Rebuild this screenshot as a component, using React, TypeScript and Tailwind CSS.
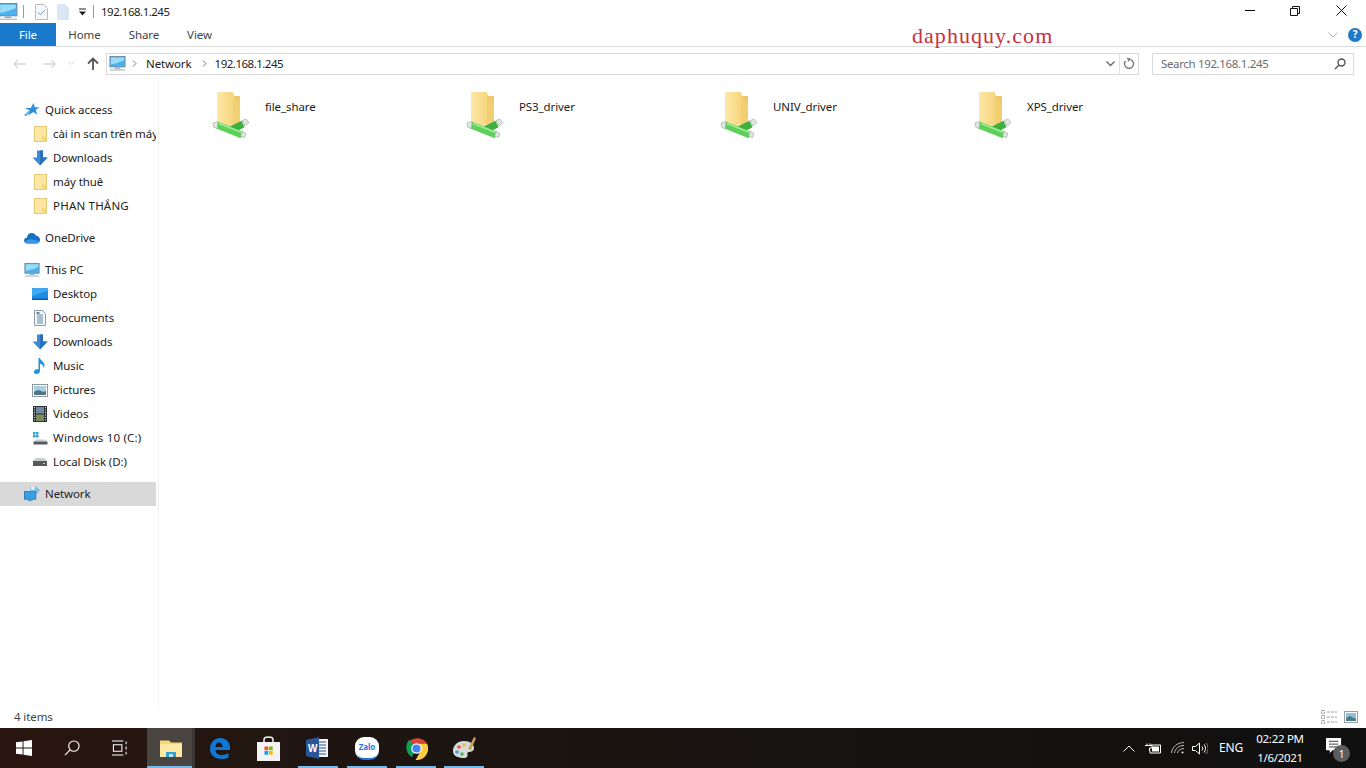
import React from "react";

const Folder = ({ s = 16 }: { s?: number }) => (
  <svg width={13} height={s} viewBox="0 0 13 16">
    <rect x=".5" y=".5" width="12" height="15" fill="#fde6a3" stroke="#e6c976" />
    <path d="M8 9l4.500 3v3.500H8z" fill="#f6d681" />
  </svg>
);
const DownArrow = () => (
  <svg width="16" height="16" viewBox="0 0 16 16">
    <path d="M5 0.5h6v7h4.500L8 15.500 0.500 7.500H5z" fill="#3d8ad6" />
    <path d="M8 0.500h3v7h4.500L8 15.500z" fill="#2a6fba" />
  </svg>
);
const Monitor = ({ w = 18 }: { w?: number }) => (
  <svg width={w} height={(w * 16) / 18} viewBox="0 0 18 16">
    <rect x="1" y="0.500" width="16" height="11" fill="#4db1ee" stroke="#6a8ca3" />
    <path d="M2 1.500h14v3C11 7 6 8 2 9z" fill="#9bdcf9" />
    <rect x="6" y="12" width="6" height="1.500" fill="#9fb0bd" />
    <rect x="1" y="14" width="16" height="1.500" fill="#b9c3cb" />
  </svg>
);
const Star = () => (
  <svg width="16" height="16" viewBox="0 0 16 16">
    <path d="M9.500 1l1.400 4.300 4.600.1-3.700 2.700 1.400 4.600-3.900-2.800L4 13.500l1.700-5L1 6.100l5.700-.1z" fill="#2f8fdc" />
    <path d="M0 13l5-4.500 1 1.500L2 14.500z" fill="#5fb3ea" />
  </svg>
);
const Cloud = () => (
  <svg width="16" height="12" viewBox="0 0 16 12">
    <path d="M3.500 11.500C1 11.500 0 10 0 8.600c0-1.700 1.300-2.800 2.800-2.800C3.300 3 5.200 1 7.800 1c2 0 3.400 1 4.200 2.800 2.200 0 4 1.800 4 4 0 2-1.500 3.700-3.500 3.700z" fill="#1670c4" />
    <path d="M3.500 11.500C2 11.500 1 10.600 1 9.600c2-1.500 5-3 8-2 2 .8 4 1.500 7 1-.2 1.700-1.800 2.900-3.500 2.900z" fill="#3c97e0" />
  </svg>
);
const DesktopIcon = () => (
  <svg width="16" height="12" viewBox="0 0 16 12">
    <rect width="16" height="12" fill="#1e8de6" />
    <path d="M0 0h16v3C10 4 5 7 0 8z" fill="#3fa8f2" />
    <rect y="10.500" width="16" height="1.500" fill="#0d5aa5" />
  </svg>
);
const Docs = () => (
  <svg width="14" height="16" viewBox="0 0 14 16">
    <path d="M1.500.5h8l3 3v12h-11z" fill="#f3f6f8" stroke="#8f9ba5" />
    <path d="M4 5h6M4 7h6M4 9h6M4 11h6M4 13h6" stroke="#5b8bad" />
    <rect x="3.500" y="2" width="3" height="2" fill="#5b8bad" />
  </svg>
);
const Music = () => (
  <svg width="12" height="16" viewBox="0 0 12 16">
    <path d="M4.500 0h1.500c.3 2.500 4.500 3.500 4.500 7.500 0 1-.3 2-.8 2.800.2-2.500-1.700-4-3.700-4.500v7.200c0 1.800-1.700 3-3.500 3S0 15 0 13.700s1.400-2.500 3-2.500c.6 0 1.100.1 1.500.3z" fill="#1c93dc" />
  </svg>
);
const Pictures = () => (
  <svg width="16" height="13" viewBox="0 0 16 13">
    <rect x=".5" y=".5" width="15" height="12" fill="#fff" stroke="#8d969c" />
    <rect x="2" y="2" width="12" height="9" fill="#a7cfe4" />
    <path d="M2 8c3-2 5-2 7-1s3 1 5 0v4H2z" fill="#4c7482" />
  </svg>
);
const Videos = () => (
  <svg width="14" height="16" viewBox="0 0 14 16">
    <rect width="14" height="16" fill="#2d3338" />
    <rect x="3" y="1" width="8" height="6.500" fill="#6f8aa0" />
    <rect x="3" y="8.500" width="8" height="6.500" fill="#7b8c5c" />
    <path d="M1 1.500h1M1 4h1M1 6.500h1M1 9h1M1 11.500h1M1 14h1M12 1.500h1M12 4h1M12 6.500h1M12 9h1M12 11.500h1M12 14h1" stroke="#dfe4e8" strokeWidth="1.200" />
  </svg>
);
const DriveC = () => (
  <svg width="15" height="13" viewBox="0 0 15 13">
    <path d="M0 0h2.500v2.500H0zM3 0h2.500v2.500H3zM0 3h2.500v2.500H0zM3 3h2.500v2.500H3z" fill="#29a4d8" />
    <path d="M3 7.500h9l2.500 2H.5z" fill="#c9cccd" />
    <rect x=".5" y="9.500" width="14" height="3" fill="#565a5d" />
  </svg>
);
const DriveD = () => (
  <svg width="14" height="8" viewBox="0 0 14 8">
    <path d="M3 0h8l3 3H0z" fill="#c9cccd" />
    <rect y="3" width="14" height="5" fill="#565a5d" />
    <rect x="10" y="5" width="2" height="1" fill="#bfe2a0" />
  </svg>
);
const NetIcon = () => (
  <svg width="17" height="16" viewBox="0 0 17 16">
    <path d="M6 1l7-1 4 4-3 4H7z" fill="#7cc0ea" />
    <path d="M8 0l4 1-2 3-3-1z" fill="#e9f0f5" />
    <rect x="0.500" y="5.500" width="12" height="8" fill="#3a9fe4" stroke="#2a7cbc" />
    <rect x="4" y="14" width="5" height="1.500" fill="#5c93ba" />
  </svg>
);

const Row = ({ icon, label, indent = false, active = false, wide = false }: { icon: React.ReactNode; label: string; indent?: boolean; active?: boolean; wide?: boolean }) => (
  <div className={`flex h-6 items-center overflow-hidden whitespace-nowrap ${active ? "bg-[#d9d9d9]" : ""} ${indent ? "pl-[32px]" : "pl-[24px]"}`}>
    <span className="flex w-4 shrink-0 items-center justify-center">{icon}</span>
    <span className={wide ? "ml-[5px] tracking-[0.2px]" : "ml-[5px]"}>{label}</span>
  </div>
);

const ShareFolder = ({ id }: { id: string }) => (
  <svg width="38" height="46" viewBox="0 0 38 46" className="shrink-0">
    <defs>
      <linearGradient id={`fb${id}`} x1="0" y1="0" x2="0" y2="1">
        <stop offset="0" stopColor="#e9c468" />
        <stop offset="1" stopColor="#f8dc8c" />
      </linearGradient>
      <linearGradient id={`ff${id}`} x1="0" y1="0" x2="1" y2="0">
        <stop offset="0" stopColor="#fde8a6" />
        <stop offset="1" stopColor="#f6d37a" />
      </linearGradient>
    </defs>
    <path d="M5 0h16v4h7v30H5z" fill={`url(#fb${id})`} />
    <path d="M5 0h16l2 12v20H5z" fill={`url(#ff${id})`} />
    <path d="M21 2l7 14v16h-7z" fill="#f4cf72" />
    <path d="M17 39L31 32" stroke="#3db040" strokeWidth="7" />
    <path d="M5 33L30 43" stroke="#5ed05a" strokeWidth="7" />
    <path d="M7 31.500L30 40.500" stroke="#a2eb9c" strokeWidth="1.500" />
    <path d="M1 31l5-1.500-.5 7-4-1.500z" fill="#dfe5df" stroke="#8a9a8a" strokeWidth=".5" />
    <path d="M30 28.500l4-1.500 3 3.500-4 3.500z" fill="#dfe5df" stroke="#8a9a8a" strokeWidth=".5" />
    <path d="M30 39.500l4 2-1.500 4-4-1.500z" fill="#dfe5df" stroke="#8a9a8a" strokeWidth=".5" />
  </svg>
);

const Share = ({ name }: { name: string }) => (
  <div className="flex w-[254px] items-start">
    <ShareFolder id={name} />
    <span className="ml-[15px] mt-[7px] leading-[16px] text-[#1a1a1a]">{name}</span>
  </div>
);

const TaskBtn = ({ children, active = false, open = false, className = "" }: { children: React.ReactNode; active?: boolean; open?: boolean; className?: string }) => (
  <div className={`relative flex h-10 w-12 items-center justify-center ${active ? "bg-[#4a4541]" : ""} ${className}`}>
    {children}
    {open && <div className={`absolute bottom-0 h-[2px] bg-[#76b9ed] ${active ? "left-0 right-[3px]" : "left-[4px] right-[4px]"}`} />}
    {active && <div className="absolute bottom-0 right-0 top-0 w-[3px] bg-[#3a3633]" />}
  </div>
);

export default function App() {
  return (
    <div className="flex h-[768px] w-[1366px] flex-col overflow-hidden bg-white text-[11.5px] tracking-[-0.1px] text-[#222] [font-family:'Noto_Sans',sans-serif]">
      {/* Title bar */}
      <div className="flex h-[23px] shrink-0 items-center">
        <div className="-ml-[2px]"><Monitor w={20} /></div>
        <div className="ml-[5px] h-[13px] w-px bg-[#9a9a9a]" />
        <svg className="ml-[11px]" width="13" height="16" viewBox="0 0 13 16">
          <path d="M.5.500h8l4 4v11H.5z" fill="#f6f8fa" stroke="#b4bcc4" />
          <path d="M3 8l2.500 3L10 5.500" stroke="#7ea4c4" fill="none" />
        </svg>
        <svg className="ml-[9px]" width="12" height="16" viewBox="0 0 12 16">
          <path d="M0 0h8l4 4v12H0z" fill="#dbe6f3" />
        </svg>
        <svg className="ml-[9px]" width="9" height="8" viewBox="0 0 9 8">
          <path d="M1 1h7" stroke="#222" />
          <path d="M1 3.500h7L4.500 7.500z" fill="#222" />
        </svg>
        <div className="ml-[6px] h-[13px] w-px bg-[#9a9a9a]" />
        <span className="ml-[7px] tracking-[-0.5px]">192.168.1.245</span>
        <div className="flex-1" />
        <div className="flex items-center pb-[2px] pr-[2px]">
          <div className="flex w-[47px] justify-center"><div className="h-px w-[10px] bg-black" /></div>
          <div className="flex w-[45px] justify-center pr-px">
            <svg width="10" height="10" viewBox="0 0 10 10" fill="none" stroke="#111">
              <path d="M.5 2.500h7v7h-7zM2.500 2.500v-2h7v7h-2" />
            </svg>
          </div>
          <div className="flex w-[46px] justify-center">
            <svg width="11" height="11" viewBox="0 0 11 11" stroke="#111"><path d="M.5.500l10 10M10.500.500l-10 10" /></svg>
          </div>
        </div>
      </div>

      {/* Ribbon tabs */}
      <div className="relative flex h-[24px] shrink-0 items-stretch border-b border-[#dadbdc]">
        <div className="flex w-[56px] items-center justify-center bg-[#1979ca] pt-px text-white">File</div>
        <div className="flex w-[57px] items-center justify-center pt-px text-[#444]">Home</div>
        <div className="flex w-[62px] items-center justify-center pt-px text-[#444]">Share</div>
        <div className="flex w-[49px] items-center justify-center pt-px text-[#444]">View</div>
        <div className="flex-1" />
        <span className="absolute left-[912px] top-0 text-[22px] leading-[26px] tracking-[1.05px] text-[#c9303c] [font-family:'Liberation_Serif',serif]">daphuquy.com</span>
        <div className="flex items-center pr-[4px]">
          <svg width="10" height="6" viewBox="0 0 10 6" fill="none" stroke="#b5b5b5"><path d="M.5.500L5 5l4.500-4.500" /></svg>
          <div className="ml-[10px] flex h-[14px] w-[14px] items-center justify-center rounded-full bg-[#1f78c8] text-[10px] font-bold text-white">?</div>
        </div>
      </div>

      {/* Address row */}
      <div className="flex h-[33px] shrink-0 items-center">
        <div className="flex w-[106px] shrink-0 items-center pl-[13px]">
          <svg width="13" height="10" viewBox="0 0 13 10" fill="none" stroke="#d6d6d6" strokeWidth="1.300"><path d="M13 5H1M5 1L1 5l4 4" /></svg>
          <svg className="ml-[17px]" width="13" height="10" viewBox="0 0 13 10" fill="none" stroke="#d6d6d6" strokeWidth="1.300"><path d="M0 5h12M8 1l4 4-4 4" /></svg>
          <svg className="ml-[12px]" width="7" height="5" viewBox="0 0 7 5" fill="none" stroke="#d6d6d6"><path d="M.5.500l3 3 3-3" /></svg>
          <svg className="ml-[12px]" width="12" height="13" viewBox="0 0 12 13" fill="none" stroke="#555" strokeWidth="1.800"><path d="M6 13V1.500M1 6.500l5-5 5 5" /></svg>
        </div>
        <div className="flex h-[22px] w-[1033px] shrink-0 items-center border border-[#d9d9d9]">
          <span className="ml-[2px]"><Monitor w={17} /></span>
          <svg className="ml-[6px]" width="5" height="7" viewBox="0 0 5 7" fill="none" stroke="#777"><path d="M1 .5l3 3-3 3" /></svg>
          <span className="ml-[9px]">Network</span>
          <svg className="ml-[10px]" width="5" height="7" viewBox="0 0 5 7" fill="none" stroke="#777"><path d="M1 .5l3 3-3 3" /></svg>
          <span className="ml-[8px] tracking-[-0.5px]">192.168.1.245</span>
          <div className="flex-1" />
          <svg className="mr-[4px]" width="9" height="6" viewBox="0 0 9 6" fill="none" stroke="#666" strokeWidth="1.300"><path d="M.5.500l4 4 4-4" /></svg>
          <div className="h-[20px] w-px bg-[#e2e2e2]" />
          <svg className="mx-[3px]" width="12" height="13" viewBox="0 0 12 13" fill="none" stroke="#777" strokeWidth="1.300"><path d="M4 1.500L6.500 2 5 4.500M6 2.300A4.500 4.500 0 1 1 2.500 4" /></svg>
        </div>
        <div className="ml-[13px] flex h-[22px] w-[202px] shrink-0 items-center justify-between border border-[#d9d9d9] pl-[8px] pr-[7px] tracking-[-0.35px] text-[#6d6d6d]">
          <span>Search 192.168.1.245</span>
          <svg width="12" height="12" viewBox="0 0 12 12" fill="none" stroke="#555" strokeWidth="1.400"><circle cx="7.500" cy="4.500" r="3.500" /><path d="M5 7l-4 4" /></svg>
        </div>
      </div>

      {/* Body */}
      <div className="flex min-h-0 flex-1">
        <div className="w-[159px] shrink-0 border-r border-[#f0f0f0] pr-[2px] pt-[18px]">
          <Row icon={<Star />} label="Quick access" />
          <Row indent icon={<Folder />} label="cài in scan trên máy" />
          <Row indent icon={<DownArrow />} label="Downloads" />
          <Row indent icon={<Folder />} label="máy thuê" />
          <Row indent wide icon={<Folder />} label="PHAN THẮNG" />
          <div className="h-2" />
          <Row icon={<Cloud />} label="OneDrive" />
          <div className="h-2" />
          <Row icon={<Monitor w={16} />} label="This PC" />
          <Row indent icon={<DesktopIcon />} label="Desktop" />
          <Row indent icon={<Docs />} label="Documents" />
          <Row indent icon={<DownArrow />} label="Downloads" />
          <Row indent icon={<Music />} label="Music" />
          <Row indent icon={<Pictures />} label="Pictures" />
          <Row indent icon={<Videos />} label="Videos" />
          <Row indent wide icon={<DriveC />} label="Windows 10 (C:)" />
          <Row indent icon={<DriveD />} label="Local Disk (D:)" />
          <div className="h-2" />
          <Row active icon={<NetIcon />} label="Network" />
        </div>
        <div className="flex flex-1 items-start pl-[53px] pt-[12px]">
          <Share name="file_share" />
          <Share name="PS3_driver" />
          <Share name="UNIV_driver" />
          <Share name="XPS_driver" />
        </div>
      </div>

      {/* Status bar */}
      <div className="flex h-[22px] shrink-0 items-center justify-between pl-[14px] pr-[8px] text-[#444]">
        <span>4 items</span>
        <div className="flex items-center gap-[7px]">
          <svg width="16" height="14" viewBox="0 0 16 14" fill="none" stroke="#9aa0a6"><path d="M.5.500h3v3h-3zM.5 5.500h3v3h-3zM.5 10.500h3v3h-3zM6 2h10M6 7h10M6 12h10" strokeDasharray="3 1" /></svg>
          <svg width="14" height="12" viewBox="0 0 14 12"><rect x=".5" y=".5" width="13" height="11" fill="#fff" stroke="#9aa0a6" /><rect x="2" y="2" width="10" height="8" fill="#8fc0dc" /><path d="M2 7l4-2 6 3v2H2z" fill="#4d7a88" /></svg>
        </div>
      </div>

      {/* Taskbar */}
      <div className="flex h-10 shrink-0 items-center bg-linear-to-r from-[#2a1610] via-[#1c1510] via-30% to-[#101010] text-white">
        <TaskBtn>
          <svg width="16" height="16" viewBox="0 0 17 17" fill="#fff"><path d="M0 2.500l7-1V8H0zM8 1.300L17 0v8H8zM0 9h7v6.500l-7-1zM8 9h9v8l-9-1.300z" /></svg>
        </TaskBtn>
        <TaskBtn>
          <svg width="16" height="16" viewBox="0 0 17 17" fill="none" stroke="#fff" strokeWidth="1.200"><circle cx="10.500" cy="6.500" r="5.500" /><path d="M6.500 10.500L1 16" /></svg>
        </TaskBtn>
        <TaskBtn>
          <svg width="16" height="16" viewBox="0 0 17 16" fill="none" stroke="#fff" strokeWidth="1.100"><path d="M0 .5h12M0 15.500h12M1.500 4.500h9v7h-9zM15 1v3M15 6.500v3M15 12v3" /></svg>
        </TaskBtn>
        <TaskBtn active open className="ml-[3px]">
          <svg width="23" height="19" viewBox="0 0 23 19">
            <path d="M0 1.500h9l2 2h11V18H0z" fill="#f9d66f" />
            <path d="M0 5h22V18H0z" fill="#ffe9a3" />
            <path d="M6 13h10v5H6z" fill="#2ea3d6" />
            <path d="M9 15h4v3H9z" fill="#bfe6f5" />
          </svg>
        </TaskBtn>
        <TaskBtn className="ml-px">
          <svg width="20" height="21" viewBox="0 0 20 21">
            <path d="M10 0c6 0 10 4 10 9.500v2.500H5.500C5.500 15 8 17 12 17c2.500 0 5-.7 6.500-2v4.500c-2 1-4.500 1.500-7 1.500C5 21 0 17 0 11 0 5 4 0 10 0zm2.700 9C12.500 6.500 11 4.500 8.500 4.500 6.500 4.500 5.500 7 5.500 9z" fill="#0f78d4" fillRule="evenodd" />
          </svg>
        </TaskBtn>
        <TaskBtn>
          <svg width="23" height="25" viewBox="0 0 23 25">
            <path d="M7 7V3.500C7 1.500 8.500 1 11.500 1S16 1.500 16 3.500V7" fill="none" stroke="#f3f3f3" strokeWidth="1.500" />
            <rect y="6" width="23" height="19" fill="#f3f3f3" />
            <rect x="7.500" y="10.500" width="3.700" height="3.700" fill="#f25022" />
            <rect x="12" y="10.500" width="3.700" height="3.700" fill="#7fba00" />
            <rect x="7.500" y="15" width="3.700" height="3.700" fill="#00a4ef" />
            <rect x="12" y="15" width="3.700" height="3.700" fill="#ffb900" />
          </svg>
        </TaskBtn>
        <TaskBtn open className="ml-[2px]">
          <svg className="-ml-[2px]" width="22" height="22" viewBox="0 0 22 22">
            <rect x="6" y="2" width="16" height="18" fill="#f4f4f4" />
            <path d="M13 5h7M13 8h7M13 11h7M13 14h7M13 17h7" stroke="#2a5699" />
            <path d="M0 3l13-3v22L0 19z" fill="#2a5699" />
            <text x="2" y="15" fontSize="10" fontWeight="700" fill="#fff" fontFamily="Liberation Sans">W</text>
          </svg>
        </TaskBtn>
        <TaskBtn open className="ml-px">
          <div className="relative flex h-[23px] w-[24px] items-center justify-center rounded-[9px] border-b-2 border-[#2b6fd8] bg-white text-[8px] font-bold leading-none text-[#2478e0]">Zalo</div>
        </TaskBtn>
        <TaskBtn open className="ml-px">
          <svg width="23" height="23" viewBox="0 0 48 48">
            <path d="M24 24L9.500 8.500A24 24 0 0 1 46 14H24z" fill="#db4437" />
            <path d="M24 24l-10 18A24 24 0 0 1 9.500 5z" fill="#0f9d58" />
            <path d="M24 14h22A24 24 0 0 1 22 48l12-21z" fill="#ffcd40" />
            <circle cx="24" cy="24" r="11" fill="#fff" />
            <circle cx="24" cy="24" r="8.500" fill="#4285f4" />
          </svg>
        </TaskBtn>
        <TaskBtn open>
          <svg width="25" height="24" viewBox="0 0 25 24">
            <path d="M1 15C1 9 6 5 12 5c6 0 10 3 10 7 0 3-3 4-5 4-1.500 0-2 1-1.500 2.500C16 20 15 22 12 22 6 22 1 20 1 15z" fill="#d7dbd9" />
            <circle cx="7" cy="11" r="1.800" fill="#e5534b" />
            <circle cx="12" cy="9" r="1.800" fill="#e9c23d" />
            <circle cx="5" cy="16" r="1.800" fill="#3e9fdb" />
            <circle cx="10" cy="18" r="1.800" fill="#52b26a" />
            <path d="M16 13L22 1l2 1-5 12z" fill="#c8a25c" />
          </svg>
        </TaskBtn>
        <div className="flex-1" />
        <div className="flex items-center">
          <svg width="12" height="7" viewBox="0 0 12 7" fill="none" stroke="#fff"><path d="M.5 6.500L6 1l5.500 5.500" /></svg>
          <svg className="ml-[10px]" width="16" height="11" viewBox="0 0 16 11" fill="none" stroke="#fff"><path d="M5 .5v2M2 .5v2M0 2.500h7v2.500H4.500V8M6 2h9.500v8H5V7.500" /><rect x="7" y="3.500" width="7" height="5" fill="#fff" stroke="none" /></svg>
          <svg className="ml-[10px]" width="14" height="12" viewBox="0 0 14 12" fill="none" stroke="#bcbcbc"><path d="M.5 11C1 5 6 .7 13 .5M3.500 11c.5-4 4-7.500 9.500-7.500M6.500 11c.4-2.200 2.500-4.500 6.500-4.500" /><circle cx="11.500" cy="10.500" r="1" fill="#fff" stroke="none" /></svg>
          <svg className="ml-[7px]" width="16" height="13" viewBox="0 0 16 13" fill="none" stroke="#fff"><path d="M.5 4.500h3l4-3.500v11l-4-3.500h-3zM10 4.500a3 3 0 0 1 0 4M12 2.500a6 6 0 0 1 0 8" /><path d="M14 1a8 8 0 0 1 0 11" stroke="#888" /></svg>
          <span className="ml-[11px] w-[24px] text-[12px]">ENG</span>
        </div>
        <div className="ml-[6px] w-[62px] text-center leading-[19px] tracking-[-0.3px]">
          <div>02:22 PM</div>
          <div>1/6/2021</div>
        </div>
        <div className="relative ml-[14px] mr-[17px] flex w-[24px] items-center">
          <svg width="17" height="16" viewBox="0 0 18 17" className="-mt-[4px] ml-[1px]"><path d="M0 0h16v13H7l-3 3v-3H0z" fill="#fff" /><path d="M3 3.500h10M3 6.500h10M3 9.500h10" stroke="#333" /></svg>
          <div className="absolute left-[8px] top-[3px] flex h-[17px] w-[17px] items-center justify-center rounded-full bg-[#5c5c5c] text-[10px] leading-none text-white">1</div>
        </div>
      </div>
    </div>
  );
}
